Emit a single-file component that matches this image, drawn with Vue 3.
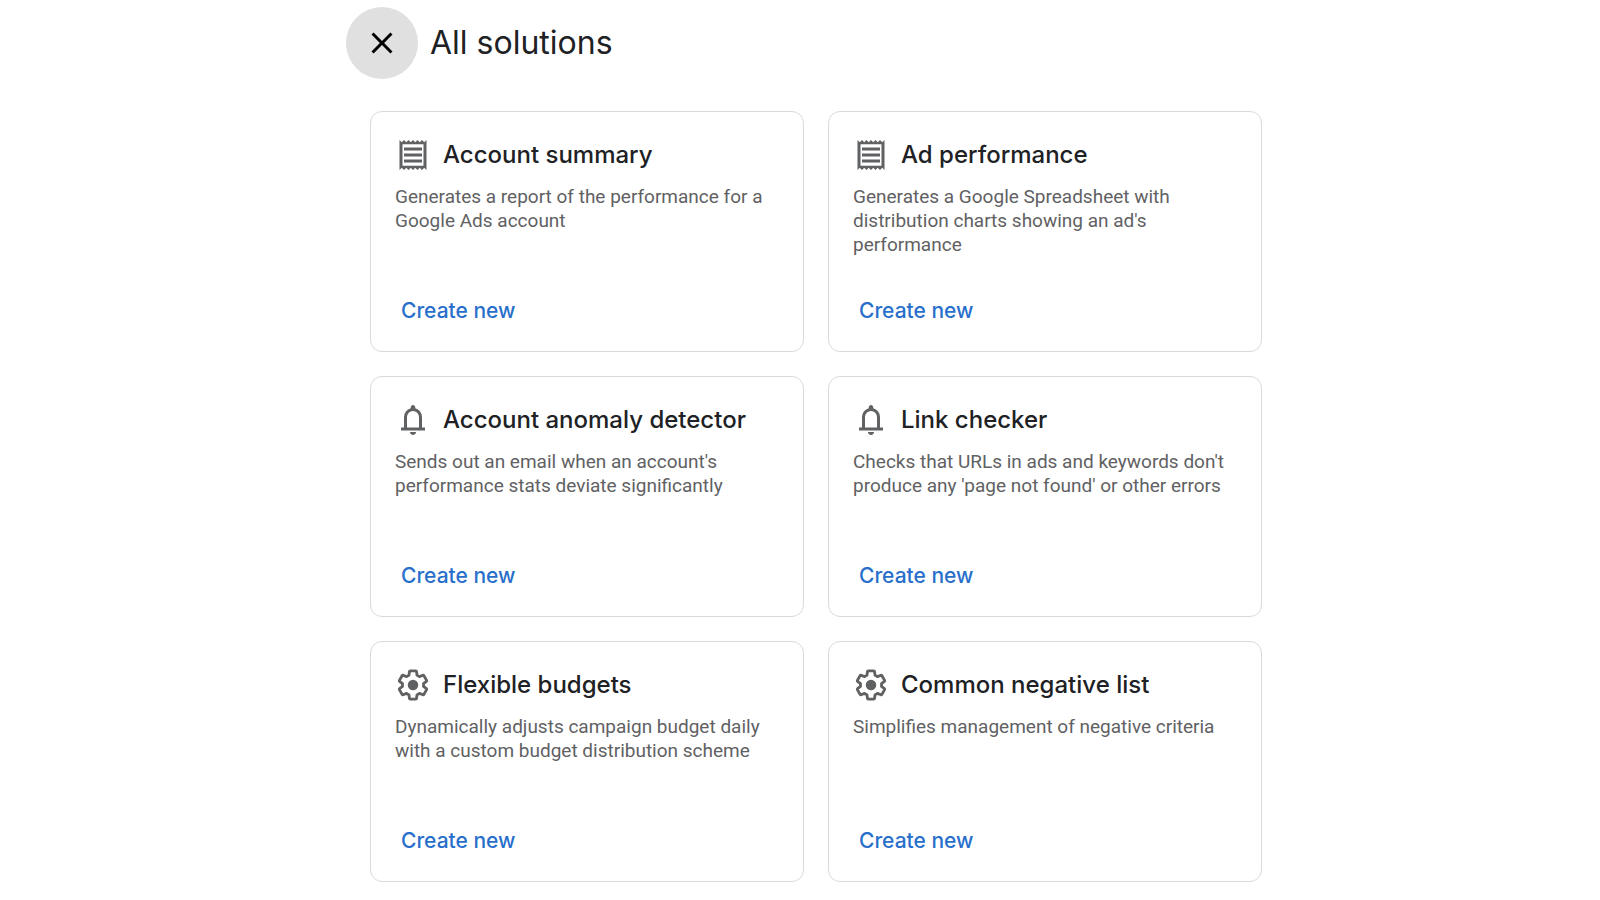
<script setup>
const icons = {
  report:
    'M19.5 3.5L18 2l-1.5 1.5L15 2l-1.5 1.5L12 2l-1.5 1.5L9 2 7.5 3.5 6 2 4.5 3.5 3 2v20l1.5-1.5L6 22l1.5-1.5L9 22l1.5-1.5L12 22l1.5-1.5L15 22l1.5-1.5L18 22l1.5-1.5L21 22V2l-1.5 1.5zM19 19.09H5V4.91h14v14.18zM6 15h12v2H6zm0-4h12v2H6zm0-4h12v2H6z',
  bell:
    'M4 19v-2h2v-7q0-2.075 1.25-3.688T10.5 4.2v-.7q0-.625.438-1.063T12 2t1.063.438T13.5 3.5v.7q2 .5 3.25 2.113T18 10v7h2v2zm8 3q-.825 0-1.412-.587T10 20h4q0 .825-.587 1.413T12 22m-4-5h8v-7q0-1.65-1.175-2.825T12 6 9.175 7.175 8 10z',
  gear:
    'M19.43 12.98c.04-.32.07-.64.07-.98 0-.34-.03-.66-.07-.98l2.11-1.65c.19-.15.24-.42.12-.64l-2-3.46c-.09-.16-.26-.25-.44-.25-.06 0-.12.01-.17.03l-2.49 1c-.52-.4-1.08-.73-1.69-.98l-.38-2.65C14.46 2.18 14.25 2 14 2h-4c-.25 0-.46.18-.49.42l-.38 2.65c-.61.25-1.17.59-1.69.98l-2.49-1c-.06-.02-.12-.03-.18-.03-.17 0-.34.09-.43.25l-2 3.46c-.13.22-.07.49.12.64l2.11 1.65c-.04.32-.07.65-.07.98 0 .33.03.66.07.98l-2.11 1.65c-.19.15-.24.42-.12.64l2 3.46c.09.16.26.25.44.25.06 0 .12-.01.17-.03l2.49-1c.52.4 1.08.73 1.69.98l.38 2.65c.03.24.24.42.49.42h4c.25 0 .46-.18.49-.42l.38-2.65c.61-.25 1.17-.59 1.69-.98l2.49 1c.06.02.12.03.18.03.17 0 .34-.09.43-.25l2-3.46c.12-.22.07-.49-.12-.64l-2.11-1.65z',
}

const solutions = [
  { icon: 'report', title: 'Account summary', text: 'Generates a report of the performance for a Google Ads account' },
  { icon: 'report', title: 'Ad performance', text: "Generates a Google Spreadsheet with distribution charts showing an ad's performance" },
  { icon: 'bell', title: 'Account anomaly detector', text: "Sends out an email when an account's performance stats deviate significantly" },
  { icon: 'bell', title: 'Link checker', text: "Checks that URLs in ads and keywords don't produce any 'page not found' or other errors" },
  { icon: 'gear', title: 'Flexible budgets', text: 'Dynamically adjusts campaign budget daily with a custom budget distribution scheme' },
  { icon: 'gear', title: 'Common negative list', text: 'Simplifies management of negative criteria' },
]
</script>

<template>
  <main class="page">
    <div class="panel">
      <header class="header">
        <button class="close" type="button" aria-label="Close">
          <svg class="icon" viewBox="0 0 24 24" aria-hidden="true">
            <path d="M19 6.41L17.59 5 12 10.59 6.41 5 5 6.41 10.59 12 5 17.59 6.41 19 12 13.41 17.59 19 19 17.59 13.41 12z" />
          </svg>
        </button>
        <h1 class="heading">All solutions</h1>
      </header>
      <section class="grid">
        <article v-for="s in solutions" :key="s.title" class="card">
          <div class="title-row">
            <svg class="icon" viewBox="0 0 24 24" aria-hidden="true">
              <template v-if="s.icon === 'gear'">
                <g transform="translate(.72 .72) scale(.94)">
                  <path class="outline" :d="icons.gear" />
                </g>
                <circle cx="12" cy="12" r="3.5" />
              </template>
              <path v-else :d="icons[s.icon]" />
            </svg>
            <h2 class="title">{{ s.title }}</h2>
          </div>
          <p class="text">{{ s.text }}</p>
          <button class="create" type="button" :aria-label="`Create new: ${s.title}`">Create new</button>
        </article>
      </section>
    </div>
  </main>
</template>

<style>
body {
  background: #fff;
}
</style>

<style scoped>
.page {
  padding: 7px 24px 16px 32px;
  font-family: Inter, Roboto, sans-serif;
  color: #202124;
}
.panel {
  max-width: 916px;
  margin: 0 auto;
}
.header {
  display: flex;
  align-items: center;
  gap: 12px;
}
.close {
  display: grid;
  place-items: center;
  width: 72px;
  height: 72px;
  padding: 0;
  border: 0;
  border-radius: 50%;
  background: #e0e0e0;
  color: #000;
  cursor: pointer;
}
.icon {
  flex: none;
  width: 36px;
  height: 36px;
  fill: currentColor;
}
.outline {
  fill: none;
  stroke: currentColor;
  stroke-width: 2;
  stroke-linejoin: round;
}
.heading {
  margin: 0;
  font-size: 32px;
  line-height: 40px;
  font-weight: 400;
}
.grid {
  display: grid;
  grid-template-columns: repeat(auto-fit, minmax(min(360px, 100%), 1fr));
  gap: 24px;
  margin-top: 32px;
  padding-left: 24px;
}
.card {
  display: flex;
  flex-direction: column;
  align-items: flex-start;
  box-sizing: border-box;
  min-height: 241px;
  padding: 25px 24px 24px;
  border: 1px solid #d8dadc;
  border-radius: 12px;
}
.title-row {
  display: flex;
  align-items: center;
  gap: 12px;
}
.title-row .icon {
  color: #5f6163;
}
.title {
  margin: 0;
  font-size: 24px;
  line-height: 36px;
  font-weight: 500;
}
.text {
  margin: 12px 0;
  font-family: Roboto, sans-serif;
  font-size: 19px;
  line-height: 24px;
  color: #5f6163;
}
.create {
  margin-top: auto;
  padding: 0 6px;
  border: 0;
  background: none;
  font-family: inherit;
  font-size: 21px;
  line-height: 32px;
  font-weight: 500;
  color: #286fcb;
  cursor: pointer;
}
</style>
